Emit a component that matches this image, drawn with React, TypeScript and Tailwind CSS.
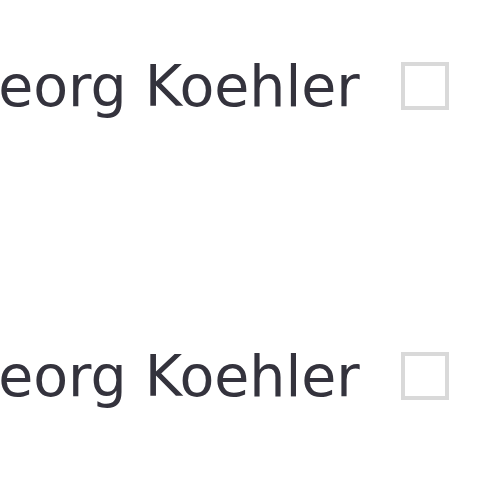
import React from 'react';

const people = ['Georg Koehler', 'Georg Koehler'];

export default function App() {
    return (
        <div className="w-[480px] h-[480px] overflow-hidden bg-white">
            <div className="flex flex-col gap-[230px] pt-[56px] ml-[-46px]">
                {people.map((name, i) => (
                    <div key={i} className="flex items-center h-[60px]">
                        <span
                            className="text-[57px] leading-none text-[#34333d] whitespace-nowrap"
                            style={{ fontFamily: '"DejaVu Sans", Verdana, sans-serif' }}
                        >
                            {name}
                        </span>
                        <div className="ml-[41px] w-[48px] h-[48px] border-[4px] border-[#d9d9d9] shrink-0" />
                    </div>
                ))}
            </div>
        </div>
    );
}
